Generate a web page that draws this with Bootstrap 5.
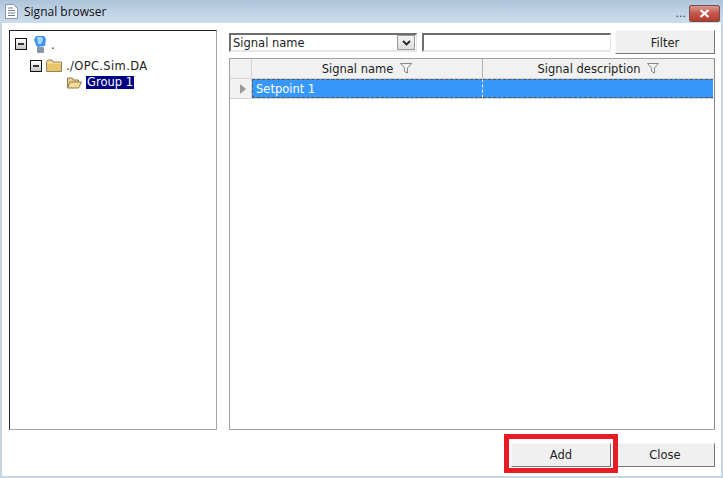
<!DOCTYPE html>
<html><head><meta charset="utf-8">
<link href="https://cdn.jsdelivr.net/npm/bootstrap@5.3.0/dist/css/bootstrap.min.css" rel="stylesheet">
<style>
html,body{margin:0;height:100%;overflow:hidden;background:#fff}
body{font-family:"DejaVu Sans","Liberation Sans",sans-serif;font-size:11.5px;color:#222;line-height:1}
.win{width:723px;height:478px;border:solid #c5d6e2;border-width:0 2px 2px 2px;box-sizing:border-box;background:#fff}
.tbar{height:23px;margin:0 -2px;background:linear-gradient(#aec4da,#c2d5e7 60%,#cbdcec);padding-left:5px}
.ttxt{font-family:"Open Sans",sans-serif;font-size:12px;color:#111;margin-left:6px;padding-top:1px}
.xbtn{width:31px;height:17px;margin:3px 3px 0 3px;background:linear-gradient(#d99a8e,#c4564a 50%,#b6392e);border:1px solid #7a4a44;border-radius:2px}
.dots{margin-top:3px;color:#333;font-size:11px}
.panes{padding:7px 6px 0 7px;height:408px}
.tree{width:208px;height:400px;border:1px solid;border-color:#222 #a5a5a5 #a5a5a5 #222;background:#fff;padding:4px 0 0 5px}
.trow{height:17px;white-space:nowrap}
.trow1{height:18px;margin-bottom:4px}
.exp{width:12px;height:12px;border:1px solid #111;background:linear-gradient(#fff,#c4c4c4);position:relative;flex:none}
.exp::after{content:"";position:absolute;left:2px;right:2px;top:4px;height:2px;background:#333}
.ind1{padding-left:15px}.ind2{padding-left:51px}
.ic1{margin-left:6px}.ic2{margin-left:4px}.tx1{margin-left:4px;padding-top:3px}.tx2{margin-left:4px;letter-spacing:.36px;padding-top:3px}.tx3{margin-left:4px}
.sel{background:#000080;color:#fff;padding:1px 1px}
.rpane{width:486px;margin-left:12px}
.frow{height:28px}
.dd{width:188px;height:19px;margin-top:3px;border:solid;border-width:2px 1px 2px 2px;border-color:#6e6e6e #e5e5e5 #e8e8e8 #6e6e6e;padding-left:2px}
.ddtx{padding-top:2px}
.ddb{width:18px;height:15px;background:linear-gradient(#f4f4f4,#ddd);border:1px solid #999;margin-right:1px}
.inp{width:189px;height:19px;margin:3px 0 0 5px;border:solid;border-width:2px 1px 2px 2px;border-color:#6e6e6e #e5e5e5 #e8e8e8 #6e6e6e}
.wbtn{width:100px;height:24px;background:#f0f0f0;border:1px solid;border-color:#f8f8f8 #777 #777 #f8f8f8;color:#222;font-size:11.5px;padding:1px 0 0}
.fbtn{margin-left:4px;padding-top:4px}
.grid{height:372px;border:1px solid #a0a0a0;border-right-color:#888;background:#fff}
.ghead{height:20px;background:#f1f1f1;border-bottom:1px solid #d4d4d4}
.ghtx{padding-top:2px}
.rh{width:22px;flex:none;border-right:1px solid #d4d4d4}
.c1{width:231px;flex:none;border-right:1px solid #b5b5b5}
.c2{flex:1}
.fic{margin-left:7px}
.rowr{height:20px;border-bottom:1px solid #d4d4d4}
.rhb{background:#f1f1f1}
.gcell{background:#3797fb;color:#fff;border-top:1px dashed #555;border-bottom:1px dashed #555;height:19px;padding:0 0 0 3px}
.gtx{padding-top:2px}
.g1{border-left:1px dashed #555;border-right:1px dashed #fff}
.g2{margin-right:1px}
.arr{width:0;height:0;border-left:6px solid #9a9a9a;border-top:5px solid transparent;border-bottom:5px solid transparent;margin-left:10px}
.foot{padding:12px 6px 0 0}
.addw{position:relative;width:100px;margin-right:4px}
.redm{position:absolute;left:-7px;top:-9px;width:114px;height:39px;border:5px solid #e81c24;pointer-events:none}
</style></head><body>
<div class="win">
 <div class="tbar d-flex align-items-center">
  <svg width="13" height="15" viewBox="0 0 13 15"><path d="M.5.5h8l4 4v10H.5z" fill="#fff" stroke="#8a97a6"/><path d="M3 4h5M3 6.500h7M3 9h7M3 11.500h7" stroke="#6f7f92"/></svg>
  <span class="ttxt">Signal browser</span>
  <span class="dots ms-auto">...</span>
  <div class="xbtn d-flex align-items-center justify-content-center"><svg width="11" height="9" viewBox="0 0 11 9"><path d="M1.500 1l8 7M9.500 1l-8 7" stroke="#fff" stroke-width="2.200"/></svg></div>
 </div>
 <div class="panes d-flex">
  <div class="tree">
   <div class="trow trow1 d-flex align-items-center">
    <span class="exp"></span>
    <svg class="ic1" width="14" height="17" viewBox="0 0 14 17"><path d="M3 0h8l2 3-1 7-8 1-3-7z" fill="#3f94ea"/><path d="M4 1h5l1 3-2 4H5z" fill="#a6d3fa"/><rect x="4" y="11" width="7" height="6" rx="1" fill="#8a94a8"/></svg>
    <span class="tx1">.</span>
   </div>
   <div class="trow ind1 d-flex align-items-center">
    <span class="exp"></span>
    <svg class="ic2" width="16" height="13" viewBox="0 0 16 13"><path d="M.5 2.500 2 1h4l1 2h8.500v9.500H.5z" fill="#f3d98b" stroke="#8f8468"/><path d="M1 5h14v7H1z" fill="#e8c566"/></svg>
    <span class="tx2">./OPC.Sim.DA</span>
   </div>
   <div class="trow ind2 d-flex align-items-center">
    <svg width="16" height="13" viewBox="0 0 16 13"><path d="M1.500 12V2h5l1 2h5v2" fill="#e7cf94" stroke="#8f7a4c"/><path d="M1.500 12 4 6h11.500l-3 6z" fill="#f6dc93" stroke="#8f7a4c"/></svg>
    <span class="sel tx3">Group 1</span>
   </div>
  </div>
  <div class="rpane d-flex flex-column">
   <div class="frow d-flex">
    <div class="dd d-flex align-items-center justify-content-between"><span class="ddtx">Signal name</span>
     <span class="ddb d-flex align-items-center justify-content-center"><svg width="9" height="6" viewBox="0 0 9 6"><path d="M1 1l3.500 3.500L8 1" fill="none" stroke="#222" stroke-width="1.800"/></svg></span>
    </div>
    <div class="inp"></div>
    <button class="wbtn fbtn" type="button">Filter</button>
   </div>
   <div class="grid">
    <div class="ghead d-flex">
     <div class="rh"></div>
     <div class="c1 d-flex align-items-center justify-content-center"><span class="ghtx">Signal name</span><svg class="fic" width="12" height="11" viewBox="0 0 12 11"><path d="M.5.500h11L7.500 5v5L4.500 8.500V5z" fill="none" stroke="#888"/></svg></div>
     <div class="c2 d-flex align-items-center justify-content-center"><span class="ghtx">Signal description</span><svg class="fic" width="12" height="11" viewBox="0 0 12 11"><path d="M.5.500h11L7.500 5v5L4.500 8.500V5z" fill="none" stroke="#888"/></svg></div>
    </div>
    <div class="rowr d-flex">
     <div class="rh rhb d-flex align-items-center"><span class="arr"></span></div>
     <div class="c1 gcell g1 d-flex align-items-center"><span class="gtx">Setpoint 1</span></div>
     <div class="c2 gcell g2"></div>
    </div>
   </div>
  </div>
 </div>
 <div class="foot d-flex justify-content-end">
  <div class="addw"><button class="wbtn w-100" type="button">Add</button><div class="redm"></div></div>
  <button class="wbtn" type="button">Close</button>
 </div>
</div>
<script src="https://cdn.jsdelivr.net/npm/bootstrap@5.3.0/dist/js/bootstrap.bundle.min.js"></script>
</body></html>
